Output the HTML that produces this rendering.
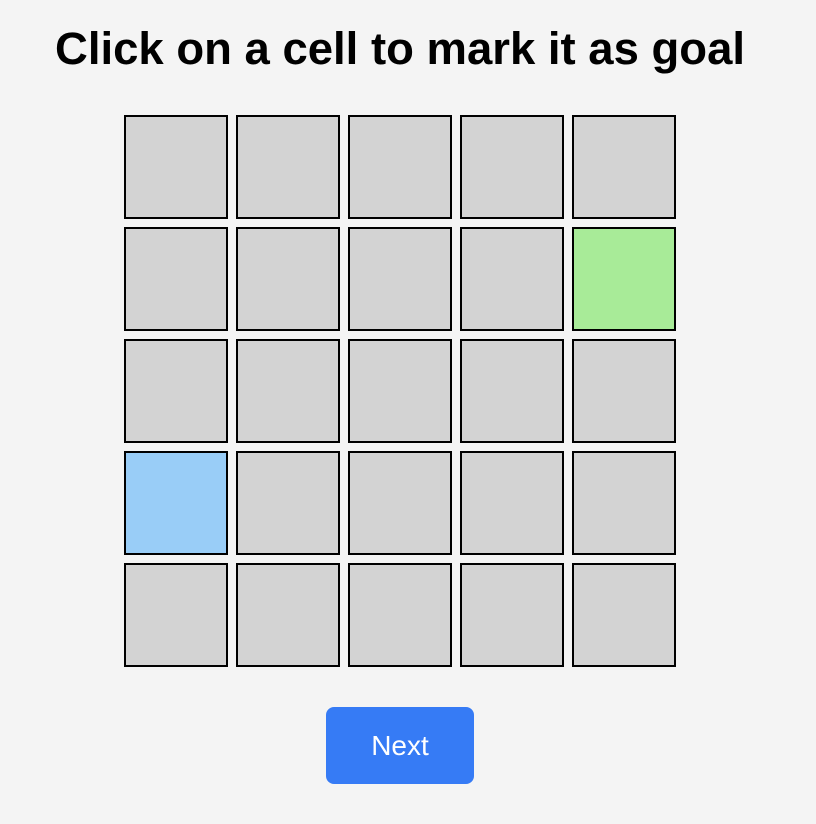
<!DOCTYPE html>
<html><head><style>
html,body{margin:0;padding:0;background:#f4f4f4;width:816px;height:824px;overflow:hidden;font-family:"Liberation Sans",Arial,sans-serif}
.c{position:absolute;width:100px;height:100px;border:2px solid #000;background:#d3d3d3}
.btn{position:absolute;left:326px;top:707px;width:148px;height:77px;border-radius:8px;background:#367bf5;color:#fff;font-size:28px;line-height:77px;text-align:center}
</style></head><body>
<svg style="position:absolute;left:0;top:0" width="816" height="90"><text x="55" y="64" font-family="Liberation Sans, Arial, sans-serif" font-weight="bold" font-size="45" textLength="690" lengthAdjust="spacingAndGlyphs" fill="#000">Click on a cell to mark it as goal</text></svg>
<div id="g"></div>
<script>
var h='';for(var r=0;r<5;r++)for(var c=0;c<5;c++){var bg='';if(r==1&&c==4)bg='background:#a8eb98;';if(r==3&&c==0)bg='background:#99cdf7;';h+='<div class="c" style="left:'+(124+c*112)+'px;top:'+(115+r*112)+'px;'+bg+'"></div>';}
document.getElementById('g').innerHTML=h;
</script>
<div class="btn">Next</div>
</body></html>
